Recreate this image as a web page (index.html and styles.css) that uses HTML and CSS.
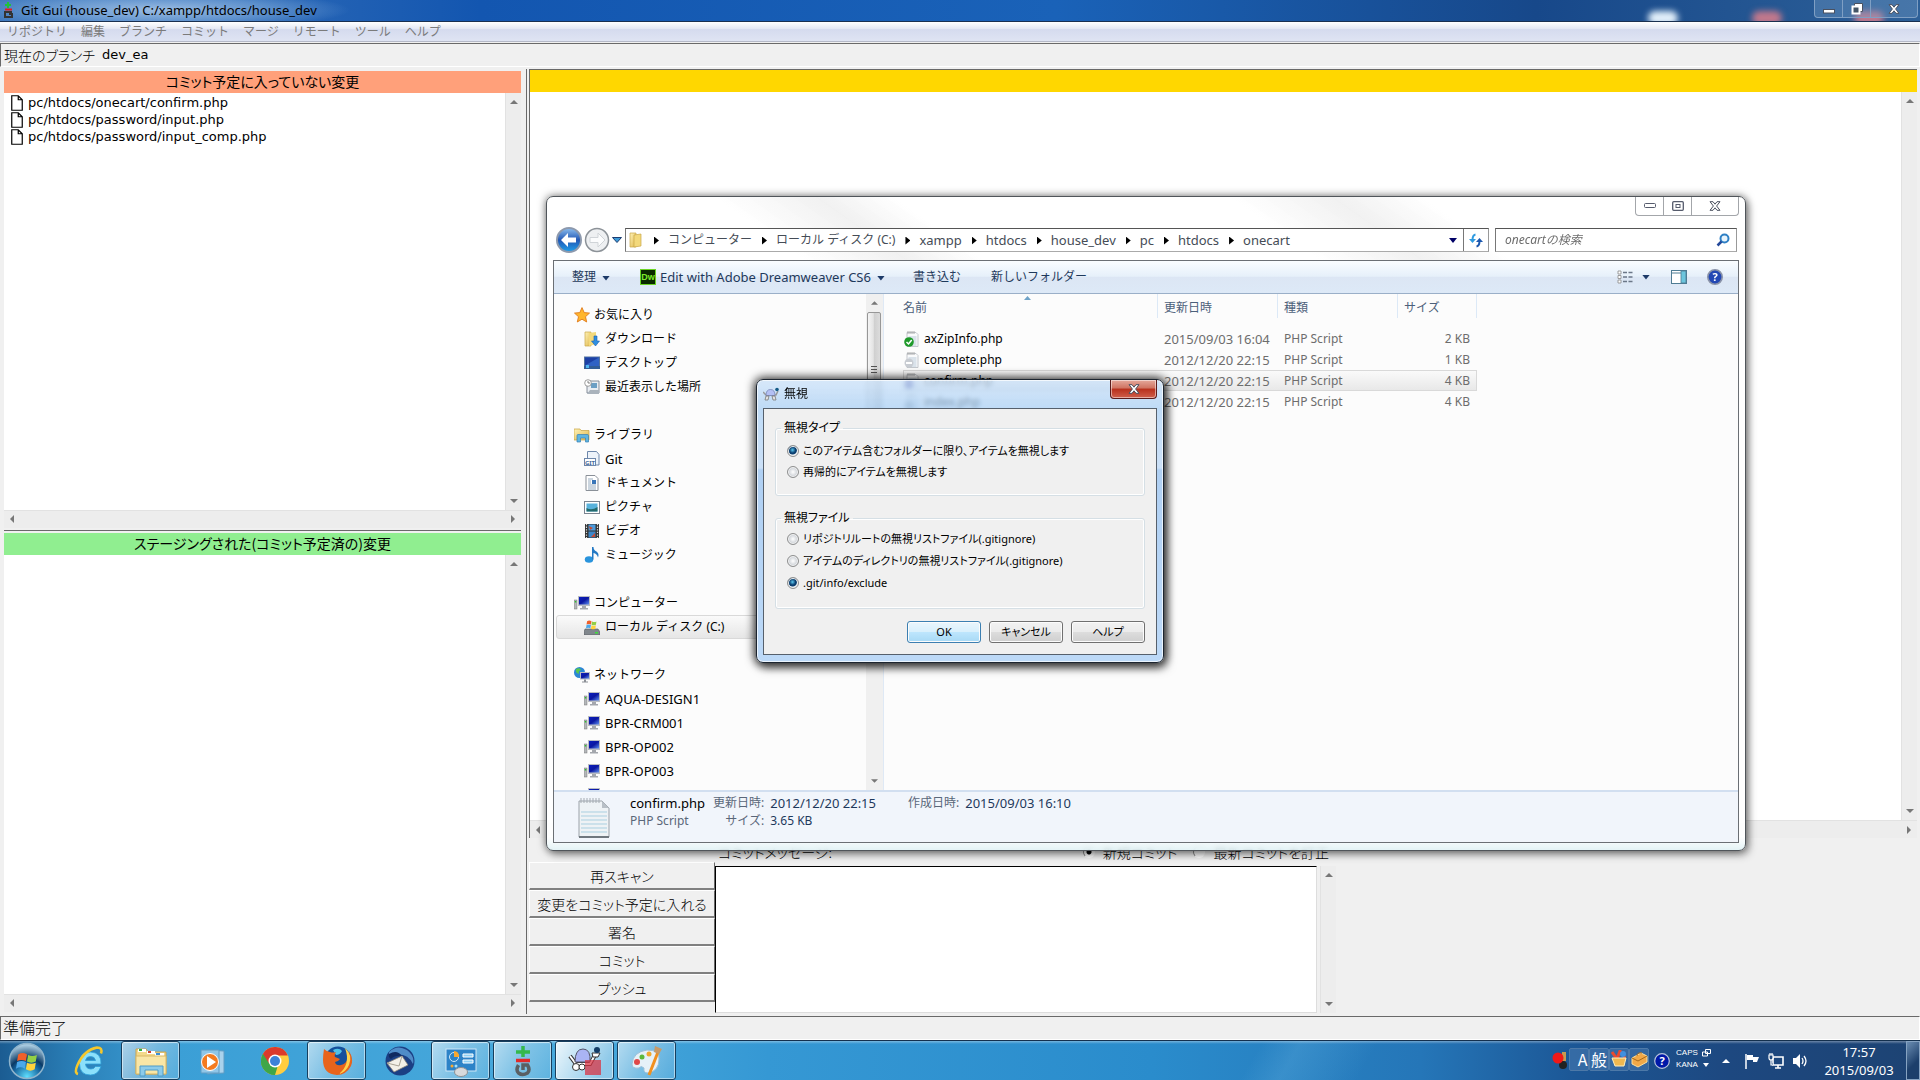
FILE: index.html
```html
<!DOCTYPE html>
<html lang="ja">
<head>
<meta charset="utf-8">
<title>Git Gui (house_dev) C:/xampp/htdocs/house_dev</title>
<link rel="stylesheet" href="styles.css">
</head>
<body>
<svg class="defs" width="0" height="0" aria-hidden="true">
  <defs>
    <linearGradient id="gYellow" x1="0" y1="0" x2="1" y2="1"><stop offset="0" stop-color="#fff3b8"/><stop offset="1" stop-color="#dfb64a"/></linearGradient>
    <linearGradient id="gScreen" x1="0" y1="0" x2="1" y2="1"><stop offset="0" stop-color="#0a1ec0"/><stop offset="0.5" stop-color="#0b17a0"/><stop offset="1" stop-color="#5c8df0"/></linearGradient>
    <linearGradient id="gBlue" x1="0" y1="0" x2="0" y2="1"><stop offset="0" stop-color="#8ec0f0"/><stop offset="0.5" stop-color="#2257b4"/><stop offset="1" stop-color="#1fa0ea"/></linearGradient>
    <radialGradient id="gOrb" cx="0.5" cy="0.95" r="0.9"><stop offset="0" stop-color="#5fe0ff"/><stop offset="0.45" stop-color="#14629c"/><stop offset="0.6" stop-color="#0a3a66"/><stop offset="1" stop-color="#a9cbe0"/></radialGradient>
  </defs>
  <symbol id="up" viewBox="0 0 8 4"><path d="M0 4 4 0 8 4z" fill="#777"/></symbol>
  <symbol id="down" viewBox="0 0 8 4"><path d="M0 0 4 4 8 0z" fill="#777"/></symbol>
  <symbol id="left" viewBox="0 0 4 8"><path d="M4 0 0 4 4 8z" fill="#777"/></symbol>
  <symbol id="right" viewBox="0 0 4 8"><path d="M0 0 4 4 0 8z" fill="#777"/></symbol>
  <symbol id="doc" viewBox="0 0 12 16"><path d="M.75 .75h6.5l4 4v10.500h-10.500z M7.250 .75v4h4" fill="#fff" stroke="#000" stroke-width="1.200"/></symbol>
  <symbol id="pc" viewBox="0 0 16 16"><rect x="4" y="1" width="12" height="10" fill="#b9bcc2"/><rect x="5" y="2" width="10" height="7.500" fill="url(#gScreen)"/><path d="M8 11h4v2h2v1.500H6V13h2z" fill="#a4a7ad"/><rect x="0" y="5" width="3" height="9" fill="#b4b7ba" stroke="#777" stroke-width=".5"/><rect x=".8" y="6" width="1.500" height="1.500" fill="#2fc02f"/></symbol>
  <symbol id="php" viewBox="0 0 16 16"><path d="M3 1.500h9l2 2v12H3z" fill="#fafbfc" stroke="#b5bac0" stroke-width=".8"/><path d="M4 0v3M6 0v3M8 0v3M10 0v3" stroke="#999" stroke-width=".8"/><path d="M4.500 6h8M4.500 8h8M4.500 10h8M4.500 12h8M4.500 14h8" stroke="#a9bfd0" stroke-width=".8"/></symbol>
  <symbol id="winx" viewBox="0 0 12 10"><path d="M1 .7h3l2 2.500 2-2.500h3L7.600 5 11 9.300H8L6 6.800 4 9.300H1L4.400 5z" fill="#fff" stroke="#4a5160"/></symbol>
  <symbol id="flagwin" viewBox="0 0 20 20"><path d="M2 4q4-2.500 8 0L9 10q-4-2-8 0z" fill="#f0602a"/><path d="M11 4.500q4 2 8 0L18 10.500q-4 2-8 0z" fill="#93cf45"/><path d="M1 11q4-2 8 0L8 17q-4-2.500-8 0z" fill="#4ca8ea"/><path d="M10 11.500q4 2 8 0l-1 6q-4 2.500-8 0z" fill="#ffd33c"/></symbol>
</svg>

<div class="desktop">
<main class="gitgui">
  <header class="titlebar">
    <svg class="i16" viewBox="0 0 16 16"><path d="M8 0v6M5 3h6" stroke="#1fc23c" stroke-width="2"/><path d="M5 7.500h7" stroke="#e02020" stroke-width="2"/><path d="M12 10H5v5h7v-3H9" fill="none" stroke="#333" stroke-width="2"/></svg>
    <h1>Git Gui (house_dev) C:/xampp/htdocs/house_dev</h1>
    <i class="glow"></i><i class="glow g2"></i><i class="glow g3"></i>
    <div class="winbtns">
      <button aria-label="最小化"><svg width="12" height="10" viewBox="0 0 12 10"><rect x=".5" y="5.500" width="11" height="3.500" fill="#fff" stroke="#4a5160"/></svg></button>
      <button aria-label="元に戻す"><svg width="12" height="12" viewBox="0 0 12 12"><path d="M3.500.5h8v8h-8z" fill="#fff" stroke="#4a5160"/><path d="M1.500 3.500h7v7h-7z" fill="#456" stroke="#fff" stroke-width="2"/></svg></button>
      <button class="wide" aria-label="閉じる"><svg width="12" height="10"><use href="#winx"/></svg></button>
    </div>
  </header>
  <nav class="menubar">
    <button>リポジトリ</button><button>編集</button><button>ブランチ</button><button>コミット</button><button>マージ</button><button>リモート</button><button>ツール</button><button>ヘルプ</button>
  </nav>
  <div class="branch"><span>現在のブランチ</span><span class="latin">dev_ea</span></div>

  <div class="panes">
    <div class="leftcol">
      <section class="filepane">
        <h2 class="unstaged">コミット予定に入っていない変更</h2>
        <div class="scrollgrid">
          <ul class="files latin">
            <li><svg width="12" height="16"><use href="#doc"/></svg>pc/htdocs/onecart/confirm.php</li>
            <li><svg width="12" height="16"><use href="#doc"/></svg>pc/htdocs/password/input.php</li>
            <li><svg width="12" height="16"><use href="#doc"/></svg>pc/htdocs/password/input_comp.php</li>
          </ul>
          <div class="vbar"><svg width="8" height="4"><use href="#up"/></svg><svg width="8" height="4"><use href="#down"/></svg></div>
          <div class="hbar"><svg width="4" height="8"><use href="#left"/></svg><svg width="4" height="8"><use href="#right"/></svg></div>
        </div>
      </section>
      <section class="filepane lower">
        <h2 class="staged">ステージングされた(コミット予定済の)変更</h2>
        <div class="scrollgrid">
          <ul class="files"></ul>
          <div class="vbar"><svg width="8" height="4"><use href="#up"/></svg><svg width="8" height="4"><use href="#down"/></svg></div>
          <div class="hbar"><svg width="4" height="8"><use href="#left"/></svg><svg width="4" height="8"><use href="#right"/></svg></div>
        </div>
      </section>
    </div>
    <div class="rightcol">
      <section class="diff">
        <div class="diffhead"></div>
        <div class="scrollgrid">
          <div class="files"></div>
          <div class="vbar"><svg width="8" height="4"><use href="#up"/></svg><svg width="8" height="4"><use href="#down"/></svg></div>
          <div class="hbar"><svg width="4" height="8"><use href="#left"/></svg><svg width="4" height="8"><use href="#right"/></svg></div>
        </div>
      </section>
      <section class="commit">
        <div class="actions">
          <button>再スキャン</button><button>変更をコミット予定に入れる</button><button>署名</button><button>コミット</button><button>プッシュ</button>
        </div>
        <div class="message">
          <div class="msghead">
            <label for="msg">コミットメッセージ:</label>
            <label class="opt"><input type="radio" name="ctype" checked>新規コミット</label>
            <label class="opt"><input type="radio" name="ctype">最新コミットを訂正</label>
          </div>
          <div class="msgbody">
            <textarea id="msg"></textarea>
            <div class="vbar"><svg width="8" height="4"><use href="#up"/></svg><svg width="8" height="4"><use href="#down"/></svg></div>
          </div>
        </div>
      </section>
    </div>
  </div>
  <footer class="status">準備完了</footer>
</main>

<section class="explorer" aria-label="onecart">
  <div class="winbtns light">
    <button aria-label="最小化"><svg width="12" height="6" viewBox="0 0 12 6"><rect x=".5" y=".5" width="11" height="4" rx="1" fill="#fff" stroke="#555b6c"/></svg></button>
    <button aria-label="最大化"><svg width="12" height="10" viewBox="0 0 12 10"><rect x=".7" y=".7" width="10.600" height="8.600" rx="1" fill="#fff" stroke="#555b6c" stroke-width="1.300"/><rect x="4" y="3.500" width="4" height="3" fill="none" stroke="#555b6c"/></svg></button>
    <button class="wide" aria-label="閉じる"><svg width="12" height="10"><use href="#winx"/></svg></button>
  </div>
  <div class="addressrow">
    <div class="navbtns">
      <button aria-label="戻る"><svg width="26" height="26" viewBox="0 0 26 26"><circle cx="13" cy="13" r="12" fill="url(#gBlue)" stroke="#8d99ad" stroke-width="2"/><path d="M5 13l7-7v4.500h8v5h-8V20z" fill="#fff"/></svg></button>
      <button aria-label="進む"><svg width="26" height="26" viewBox="0 0 26 26"><circle cx="13" cy="13" r="11.500" fill="#eef0f2" stroke="#8c9298" stroke-width="1.500"/><path d="M21 13l-7-7v4.500H6v5h8V20z" fill="#fbfcfd" stroke="#d0d4d8"/></svg></button>
      <button aria-label="履歴"><svg width="10" height="6" viewBox="0 0 10 6"><path d="M.5.500h9L5 5.500z" fill="#3e9bd8" stroke="#1c3d72"/></svg></button>
    </div>
    <div class="address">
      <svg class="i16" viewBox="0 0 16 16"><path d="M2 1h6v14H2z" fill="url(#gYellow)" stroke="#c9a648" stroke-width=".7"/><path d="M6 3l7-1v12l-7 1z" fill="#f3d97c" stroke="#c9a648" stroke-width=".7"/></svg>
      <b></b><a href="#">コンピューター</a><b></b><a href="#">ローカル ディスク (C:)</a><b></b><a href="#" class="lat">xampp</a><b></b><a href="#" class="lat">htdocs</a><b></b><a href="#" class="lat">house_dev</a><b></b><a href="#" class="lat">pc</a><b></b><a href="#" class="lat">htdocs</a><b></b><a href="#" class="lat">onecart</a>
      <i class="caret"></i>
      <button class="refresh" aria-label="更新"><svg width="16" height="16" viewBox="0 0 16 16"><path d="M7.500 2.500Q4.500 3 4.500 8" fill="none" stroke="#2e9ae0" stroke-width="2"/><path d="M1 7h7l-3.500 4z" fill="#2e9ae0"/><path d="M8.500 14.500q3-.5 3-5.500" fill="none" stroke="#1c57ae" stroke-width="2"/><path d="M8 10h7l-3.500-4z" fill="#1c57ae"/></svg></button>
    </div>
    <div class="search"><input type="text" aria-label="検索" placeholder="onecartの検索"><svg width="14" height="14" viewBox="0 0 14 14"><circle cx="8.500" cy="5.500" r="4" fill="#e8f4fc" stroke="#2e7fc4" stroke-width="2"/><path d="M5.500 8.500 1.500 12.500" stroke="#24489a" stroke-width="2.500"/></svg></div>
  </div>
  <div class="client">
    <div class="toolbar">
      <button>整理<i class="caret"></i></button>
      <button class="dw"><span class="dwicon">Dw</span><span class="lat">Edit with Adobe Dreamweaver CS6</span><i class="caret"></i></button>
      <button class="burn">書き込む</button>
      <button class="newf">新しいフォルダー</button>
      <div class="tools">
        <button aria-label="表示"><svg width="16" height="14" viewBox="0 0 16 14"><path d="M1 1h3v3H1zM1 5.500h3v3H1zM1 10h3v3H1z" fill="#fff" stroke="#888" stroke-width=".8"/><path d="M6 2.500h4M6 7h4M6 11.500h4M11.500 2.500h4M11.500 7h4M11.500 11.500h4" stroke="#6b7788" stroke-width="1.300"/></svg></button>
        <i class="caret"></i>
        <button aria-label="プレビュー"><svg width="16" height="14" viewBox="0 0 16 14"><rect x=".5" y=".5" width="15" height="13" fill="#fff" stroke="#4e7c94"/><path d="M0 3h16" stroke="#4e7c94"/><rect x="10" y="1" width="5" height="12" fill="#6cc5dd" stroke="#4e7c94" stroke-width=".8"/></svg></button>
        <button aria-label="ヘルプ"><svg width="16" height="16" viewBox="0 0 16 16"><circle cx="8" cy="8" r="7.200" fill="#2348b4" stroke="#8a93a8" stroke-width="1.600"/><text x="8" y="12" text-anchor="middle" font-size="11" font-weight="bold" fill="#fff">?</text></svg></button>
      </div>
    </div>
    <div class="body">
      <nav class="tree">
        <ul>
          <li><a href="#"><svg class="i16" viewBox="0 0 16 16"><path d="M8 .6l2.200 5 5.300.5-4 3.600 1.200 5.300L8 12.200 3.300 15l1.200-5.300-4-3.600 5.300-.5z" fill="#ffb62e" stroke="#e07b1c" stroke-width=".9"/></svg>お気に入り</a>
            <ul>
              <li><a href="#"><svg class="i16" viewBox="0 0 16 16"><path d="M1 1h6v14H1z" fill="url(#gYellow)" stroke="#c9a648" stroke-width=".7"/><path d="M5 2l7-1v12l-7 2z" fill="#f3d97c"/><path d="M10 5h3v5h2.500L11.500 15 7.500 10H10z" fill="#2f8fe0" stroke="#1a5fae" stroke-width=".6"/></svg>ダウンロード</a></li>
              <li><a href="#"><svg class="i16" viewBox="0 0 16 16"><rect x=".5" y="2" width="15" height="11.500" fill="#2f62c4" stroke="#55739c"/><path d="M1 2.500h14l-14 8z" fill="#1c3fa4"/><path d="M0 11h16v3H0z" fill="#315d96"/><rect x="2" y="10" width="3" height="3" fill="#4fb4f0"/></svg>デスクトップ</a></li>
              <li><a href="#"><svg class="i16" viewBox="0 0 16 16"><path d="M5 2h10v12H3V6z" fill="#e9edf2" stroke="#7a8490" stroke-width=".9"/><rect x="7" y="4" width="6" height="5" fill="#6c9fc4"/><path d="M3 15l3-4h9v4z" fill="#aab3bc"/><circle cx="4" cy="4" r="3.300" fill="#fff" stroke="#888" stroke-width=".8"/><path d="M4 2v2h2" fill="none" stroke="#555" stroke-width=".7"/></svg>最近表示した場所</a></li>
            </ul></li>
          <li><a href="#"><svg class="i16" viewBox="0 0 16 16"><path d="M0 2h6l1 1.500h8V13H0z" fill="url(#gYellow)" stroke="#c6a23e" stroke-width=".7"/><path d="M3 15V8.500q0-1 1-1h9q1.500 0 1.500 1V15h-3v-4h-5v4z" fill="#5fb5e0" stroke="#3580b4" stroke-width=".7"/></svg>ライブラリ</a>
            <ul>
              <li><a href="#" class="lat"><svg class="i16" viewBox="0 0 16 16"><path d="M3.500.5h9l2.500 3V14H3.500z" fill="#edf3fa" stroke="#6d87ab"/><rect x=".5" y="7.500" width="11" height="7" fill="#fff" stroke="#6d87ab"/><text x="6" y="13.500" text-anchor="middle" font-size="6" font-weight="bold" fill="#45689a">GIT</text></svg>Git</a></li>
              <li><a href="#"><svg class="i16" viewBox="0 0 16 16"><path d="M2 .5h9l3 3v12H2z" fill="#fff" stroke="#8a9098"/><path d="M4 4h5M4 6h3M4 8h3M4 10h8M4 12h8M4 14h8" stroke="#8da3b8" stroke-width=".9"/><rect x="8" y="5" width="4" height="4" fill="#3a76b8"/></svg>ドキュメント</a></li>
              <li><a href="#"><svg class="i16" viewBox="0 0 16 16"><rect x=".5" y="2.500" width="15" height="12" fill="#fff" stroke="#7a8490"/><rect x="2.500" y="4.500" width="11" height="8" fill="#58b2dc"/><path d="M2.500 9q5 3 11-1v4.500h-11z" fill="#246a6c"/></svg>ピクチャ</a></li>
              <li><a href="#"><svg class="i16" viewBox="0 0 16 16"><rect x="1" y="1" width="14" height="14" fill="#333"/><path d="M2.500 1v14M13.500 1v14" stroke="#ddd" stroke-width="1.200" stroke-dasharray="1.300 1.300"/><rect x="4.500" y="1.500" width="7" height="6" fill="#4c9bdc"/><rect x="4.500" y="8.500" width="7" height="6" fill="#3c86c8"/><path d="M5 3l4 2-3 2zM7 14l4-4v4z" fill="#c04a34"/></svg>ビデオ</a></li>
              <li><a href="#"><svg class="i16" viewBox="0 0 16 16"><ellipse cx="5" cy="12.500" rx="4.200" ry="3.200" fill="#2a94dc"/><path d="M8 12.500V0h1.500q0 3 3 4.500 3 2 1.500 6-1-4-4.500-4.500v6.500z" fill="#2479c4"/></svg>ミュージック</a></li>
            </ul></li>
          <li><a href="#"><svg class="i16"><use href="#pc"/></svg>コンピューター</a>
            <ul>
              <li class="sel"><a href="#"><svg class="i16" viewBox="0 0 16 16"><path d="M1 10h13l2 3v3H0v-3z" fill="#80868c" stroke="#55595e" stroke-width=".6"/><rect x="11" y="13" width="3" height="1.500" fill="#3ae03a"/><svg x="2" y="0" width="11" height="11"><use href="#flagwin"/></svg></svg>ローカル ディスク (C:)</a></li>
            </ul></li>
          <li><a href="#"><svg class="i16" viewBox="0 0 16 16"><circle cx="5.500" cy="5.500" r="5.500" fill="#2c86d4"/><path d="M2 2q4-2 5 1-3 1-2 4-4-1-3-5z" fill="#57c84c"/><rect x="6" y="5" width="10" height="7.500" fill="#b9bcc2"/><rect x="7" y="6" width="8" height="5.500" fill="url(#gScreen)"/><path d="M10 12.500h2v2h2v1H8v-1h2z" fill="#8b8f96"/></svg>ネットワーク</a>
            <ul class="lat">
              <li><a href="#"><svg class="i16"><use href="#pc"/></svg>AQUA-DESIGN1</a></li>
              <li><a href="#"><svg class="i16"><use href="#pc"/></svg>BPR-CRM001</a></li>
              <li><a href="#"><svg class="i16"><use href="#pc"/></svg>BPR-OP002</a></li>
              <li><a href="#"><svg class="i16"><use href="#pc"/></svg>BPR-OP003</a></li>
              <li><a href="#" aria-label="PC"><svg class="i16"><use href="#pc"/></svg></a></li>
            </ul></li>
        </ul>
      </nav>
      <div class="treebar"><svg width="7" height="4"><use href="#up"/></svg><div class="thumb"></div><svg width="7" height="4"><use href="#down"/></svg></div>
      <div class="list">
        <table>
          <colgroup><col class="cname"><col class="cmid"><col class="cmid"><col class="csize"></colgroup>
          <thead><tr><th class="sorted">名前</th><th>更新日時</th><th>種類</th><th>サイズ</th></tr></thead>
          <tbody>
            <tr><td><div class="fname"><svg class="i16" viewBox="0 0 16 16"><use href="#php"/><circle cx="5" cy="11" r="4.800" fill="#1f9a2a"/><path d="M2.500 11l2 2 3.200-4" fill="none" stroke="#fff" stroke-width="1.500"/></svg>axZipInfo.php</div></td><td class="lat">2015/09/03 16:04</td><td>PHP Script</td><td>2 KB</td></tr>
            <tr><td><div class="fname"><svg class="i16" viewBox="0 0 16 16"><use href="#php"/><circle cx="5" cy="11" r="4.500" fill="#c8ccd2"/><path d="M2 11h6" stroke="#fff" stroke-width="2"/></svg>complete.php</div></td><td class="lat">2012/12/20 22:15</td><td>PHP Script</td><td>1 KB</td></tr>
            <tr class="sel"><td><div class="fname"><svg class="i16" viewBox="0 0 16 16"><use href="#php"/><circle cx="5" cy="11" r="4.500" fill="#3a3f9a"/></svg>confirm.php</div></td><td class="lat">2012/12/20 22:15</td><td>PHP Script</td><td>4 KB</td></tr>
            <tr><td><div class="fname"><svg class="i16" viewBox="0 0 16 16"><use href="#php"/><circle cx="5" cy="11" r="4.500" fill="#aab0b8"/></svg>index.php</div></td><td class="lat">2012/12/20 22:15</td><td>PHP Script</td><td>4 KB</td></tr>
          </tbody>
        </table>
      </div>
    </div>
    <div class="details">
      <svg width="32" height="40" viewBox="0 0 32 40"><path d="M1 3h23l7 7v29H1z" fill="#eef2f5" stroke="#9aa1a8"/><path d="M24 3v7h7z" fill="#b8bfc6"/><path d="M3 0v5M6 0v5M9 0v5M12 0v5M15 0v5M18 0v5M21 0v5" stroke="#a5abb2"/><path d="M3 14h26M3 18h26M3 22h26M3 26h26M3 30h26M3 34h26" stroke="#a9cfe0"/><path d="M1 39h30" stroke="#6f777e" stroke-width="2"/></svg>
      <div class="dgrid">
        <strong>confirm.php</strong><span class="k">更新日時:</span><span class="lat">2012/12/20 22:15</span><span class="k">作成日時:</span><span class="lat">2015/09/03 16:10</span>
        <span class="type">PHP Script</span><span class="k">サイズ:</span><span>3.65 KB</span>
      </div>
    </div>
  </div>
</section>

<form class="dialog" aria-label="無視">
  <div class="dtitle">
    <svg width="16" height="14" viewBox="0 0 16 14"><path d="M0 5l3 3h10l2-4" fill="none" stroke="#999" stroke-width="1.500"/><path d="M3 8.500q0-6 4.500-6T12 8.500z" fill="#b4c0f4" stroke="#7a88b8" stroke-width=".8"/><circle cx="14" cy="2.500" r="1.800" fill="#135a86"/><path d="M3 9l-1 4h3l1-4zM9 9l1 4h3l-1-4z" fill="#e5e5e5" stroke="#777" stroke-width=".8"/></svg>
    <span>無視</span>
    <button type="button" class="redclose" aria-label="閉じる"><svg width="12" height="10"><use href="#winx"/></svg></button>
  </div>
  <div class="dbody">
    <fieldset class="f1">
      <legend>無視タイプ</legend>
      <label><input type="radio" name="itype" checked>このアイテム含むフォルダーに限り、アイテムを無視します</label>
      <label><input type="radio" name="itype">再帰的にアイテムを無視します</label>
    </fieldset>
    <fieldset class="f2">
      <legend>無視ファイル</legend>
      <label><input type="radio" name="ifile">リポジトリルートの無視リストファイル(.gitignore)</label>
      <label><input type="radio" name="ifile">アイテムのディレクトリの無視リストファイル(.gitignore)</label>
      <label><input type="radio" name="ifile" checked>.git/info/exclude</label>
    </fieldset>
    <div class="dbtns"><button type="button" class="ok">OK</button><button type="button">キャンセル</button><button type="button">ヘルプ</button></div>
  </div>
</form>

<footer class="taskbar">
  <button class="start" aria-label="スタート"><svg width="38" height="38" viewBox="0 0 38 38"><circle cx="19" cy="19" r="17.500" fill="url(#gOrb)" stroke="#8fb4cc" stroke-width="1.500"/><svg x="8" y="8" width="22" height="22"><use href="#flagwin"/></svg></svg></button>
  <button class="task" aria-label="Internet Explorer"><svg width="32" height="32" viewBox="0 0 32 32"><path d="M28 19H12.500q.5 5 5.500 5 3 0 4.500-2.500H28Q25 30 17.500 30 6.500 30 6.500 18.500T17.500 7Q28.500 7.500 28 19zM12.500 15.500h10q-.5-4-5-4t-5 4z" fill="#8be0fb" stroke="#2f9fd8" stroke-width=".8"/><path d="M5 29q-4-1-.5-9Q11 5 24 2.500q6 0 4 6" fill="none" stroke="#f5c72c" stroke-width="2.500"/></svg></button>
  <button class="task on" aria-label="エクスプローラー"><svg width="34" height="32" viewBox="0 0 34 32"><path d="M2 4h10l2 3h18v22H2z" fill="#f3d98a" stroke="#c9a450"/><path d="M4 4h8v3H4z" fill="#fff"/><path d="M5 4h3v2H5z" fill="#2fae3a"/><path d="M13 6h8v3h-8z" fill="#fff"/><path d="M14 6h3v2h-3z" fill="#d04030"/><path d="M21 8h9v3h-9z" fill="#fff"/><path d="M22 8h4v2h-4z" fill="#3a90d8"/><path d="M2 11h30v18H2z" fill="#f9e6a6" stroke="#d8b866"/><path d="M6 31V21h23v10h-5v-6H11v6z" fill="#8ccbea" stroke="#4f9cc8"/></svg></button>
  <button class="task" aria-label="Media Player"><svg width="30" height="30" viewBox="0 0 30 30"><path d="M9 4l17 1v22l-17 1z" fill="#a9d2ec" stroke="#5e9cc4"/><path d="M3 4h18v23H3z" fill="#90c6e8" stroke="#5e9cc4"/><circle cx="12" cy="16" r="8.500" fill="#f57b20" stroke="#fff"/><path d="M9 10l9 6-9 6z" fill="#fff"/></svg></button>
  <button class="task" aria-label="Chrome"><svg width="30" height="30" viewBox="0 0 30 30"><circle cx="15" cy="15" r="14" fill="#ffcd40"/><path d="M15 15v14A14 14 0 0 1 2.900 8z" fill="#3fa648"/><path d="M9.400 18.200 2.900 8A14 14 0 0 1 27.800 9.500H15z" fill="#dc3a2c"/><path d="M15 29A14 14 0 0 1 2.900 8l6.500 10.200 8 3z" fill="#3fa648"/><circle cx="15" cy="15" r="6.500" fill="#fff"/><circle cx="15" cy="15" r="5" fill="#3d82d8"/></svg></button>
  <button class="task on" aria-label="Firefox"><svg width="32" height="32" viewBox="0 0 32 32"><circle cx="17" cy="15" r="13.500" fill="#14509c"/><path d="M12 5q6-3 9 1-2 4-6 4z" fill="#4fc0e8"/><path d="M3 4q3 3 6 3 3 1 6 0-2 3-1 5l5 2q-2 3-5 3 1 4 6 3 5-1 7-7 1 7-4 10 7-3 5-17 5 8 2 15Q25 30 16 30 2 29 2 15q0-5 1-11z" fill="#e8641c"/><path d="M24 3q8 7 4 17-3 7-10 9 12-10 6-26z" fill="#ffd24a"/></svg></button>
  <button class="task" aria-label="Thunderbird"><svg width="32" height="32" viewBox="0 0 32 32"><circle cx="17" cy="16" r="14.500" fill="#1b3f84"/><path d="M6 7Q14-1 24 5q8 6 6 14Q24 6 6 11z" fill="#4f8cc8"/><path d="M4 18l15-7 6 9-14 7z" fill="#f3f0e8" stroke="#8a8578" stroke-width=".8"/><path d="M4 18l12 3 3-10" fill="none" stroke="#a8a294"/><path d="M6 9q8-5 13 2-7-1-11 3-3-2-2-5z" fill="#102a60"/></svg></button>
  <button class="task on" aria-label="コントロール"><svg width="34" height="32" viewBox="0 0 34 32"><rect x="2" y="4" width="30" height="22" fill="#2c83c8" stroke="#cfe8f8"/><circle cx="10" cy="12" r="4.500" fill="none" stroke="#cfe8f8"/><path d="M10 12V6a5 5 0 0 1 5 6z" fill="#f8a830"/><path d="M19 9h10v3H19zM19 15h10v3H19z" fill="#8fd0f4" stroke="#fff"/><circle cx="8" cy="21" r="1.500" fill="#f8a830"/><circle cx="12" cy="21" r="1.500" fill="#9fe0ff"/><ellipse cx="17" cy="27" rx="6.500" ry="4.500" fill="#d8dadc" stroke="#8c9094"/></svg></button>
  <button class="task on" aria-label="Git Gui"><svg width="20" height="32" viewBox="0 0 20 32"><path d="M10 1v11M3 7h14" stroke="#35b84c" stroke-width="3.500"/><path d="M3 15.500h14" stroke="#e02a2a" stroke-width="3.500"/><path d="M5.500 20q-3 5 0 8 4 3 9 0 3-3 0-8H10v5" fill="none" stroke="#5a5f63" stroke-width="3.500"/></svg></button>
  <button class="task on bright" aria-label="TortoiseGit"><svg width="34" height="32" viewBox="0 0 34 32"><path d="M2 11l6 8h14l5-9" fill="none" stroke="#333" stroke-width="4"/><path d="M2 11l6 8h14l5-9" fill="none" stroke="#fff" stroke-width="2"/><path d="M7 17Q7 4 15 4t7 13z" fill="#aab4f4" stroke="#556"/><path d="M24 8h8l-2 4h-5z" fill="#fff" stroke="#333"/><circle cx="29" cy="5" r="3" fill="#123c66"/><circle cx="8" cy="22" r="3.500" fill="#fff" stroke="#333"/><circle cx="14" cy="22" r="3" fill="#fff" stroke="#333"/><path d="M17 15h16v15H17z" fill="#d83444" opacity=".75"/></svg></button>
  <button class="task on" aria-label="ペイント"><svg width="34" height="32" viewBox="0 0 34 32"><path d="M2 19Q3 7 17 5q13 0 12 9 0 12-11 14-5 0-4-5-3-3-5 0-7 1-7-4z" fill="#e6f1f8" stroke="#9cc0d8"/><circle cx="7" cy="17" r="3" fill="#e04848"/><circle cx="12" cy="12" r="2.500" fill="#5cb83c"/><circle cx="19" cy="9" r="2.500" fill="#f0a830"/><path d="M28 7l-9 23" stroke="#f09020" stroke-width="3"/><path d="M25 1l7 3-3 5-5-2z" fill="#c89a68"/></svg></button>
  <div class="tray">
    <svg width="16" height="18" viewBox="0 0 16 18"><circle cx="11" cy="13" r="4" fill="#222"/><path d="M10 0h4v9h-4z" fill="#c89a50"/><circle cx="6" cy="6" r="5.500" fill="#f01818"/></svg>
    <div class="ime"><button class="alpha">A</button><button>般</button><button aria-label="パッド"><svg width="18" height="18" viewBox="0 0 18 18"><path d="M2 2l5 7 3-8 5 7" fill="none" stroke="#e84a30" stroke-width="3"/><path d="M2 8h14l-2 8H5z" fill="#f0b850" stroke="#fff0c0"/><circle cx="13" cy="4" r="3" fill="#3f90e0"/></svg></button><button aria-label="ツール"><svg width="18" height="18" viewBox="0 0 18 18"><path d="M2 8l9-5 6 3v6l-9 5-6-3z" fill="#f0a848" stroke="#ffdf9a"/><path d="M2 8l6 3 9-5M7 6q0-4 5-3" fill="none" stroke="#a86818"/></svg></button></div>
    <svg width="16" height="16" viewBox="0 0 16 16"><circle cx="8" cy="8" r="7.300" fill="#0018a8" stroke="#b8c4dc" stroke-width="1.200"/><text x="8" y="12" text-anchor="middle" font-size="11" font-weight="bold" fill="#fff">?</text></svg>
    <div class="caps"><span>CAPS</span><svg width="9" height="8" viewBox="0 0 9 8"><path d="M3.500.5h5v4h-5zM.500 3h5v4h-5z" fill="#1f4a80" stroke="#fff"/></svg><span>KANA</span><svg width="6" height="4" viewBox="0 0 6 4"><path d="M0 0h6L3 4z" fill="#fff"/></svg></div>
    <svg class="more" width="8" height="4" viewBox="0 0 8 4"><path d="M0 4 4 0 8 4z" fill="#fff"/></svg>
    <svg width="16" height="16" viewBox="0 0 16 16"><path d="M2 1v15" stroke="#fff" stroke-width="1.500"/><path d="M3 2h6v2h6l-2 5H9V7H3z" fill="#fff"/></svg>
    <svg width="16" height="16" viewBox="0 0 16 16"><path d="M5 4h10v8H5zM7 15h6M10 12v3" fill="none" stroke="#fff" stroke-width="1.600"/><path d="M1 2v3q0 2 2 2t2-2V2zM3 7v5h2M2 0v2M4 0v2" fill="#1f4a80" stroke="#fff" stroke-width="1.200"/></svg>
    <svg width="16" height="16" viewBox="0 0 16 16"><path d="M1 5h3l4-4v14l-4-4H1z" fill="#fff"/><path d="M10 5q2 3 0 6M12 3q4 5 0 10" fill="none" stroke="#fff" stroke-width="1.300"/></svg>
    <div class="clock"><time>17:57</time><time>2015/09/03</time></div>
    <button class="peek" aria-label="デスクトップの表示"></button>
  </div>
</footer>
</div>
</body>
</html>
```
FILE: styles.css
```css
* { box-sizing: border-box; }
body {
  margin: 0;
  background: #f0f0f0;
  color: #000;
  font: 12px/16px "Noto Sans", "Noto Sans CJK JP", sans-serif;
}
h1, h2, ul { margin: 0; padding: 0; font-weight: normal; list-style: none; }
button { margin: 0; padding: 0; border: 0; background: none; color: inherit; font: inherit; }
a { color: inherit; text-decoration: none; }
svg { display: block; flex: none; }
.defs { position: absolute; }
.i16 { width: 16px; height: 16px; }
.lat { font-size: 13px; }

.desktop { position: relative; display: flex; flex-direction: column; min-height: 100vh; overflow: hidden; }

/* Git Gui main window */
.gitgui {
  flex: 1; display: flex; flex-direction: column;
  font: 300 14px/20px "Noto Sans CJK JP", sans-serif;
  font-feature-settings: "palt";
}
.titlebar {
  position: relative; display: flex; align-items: center; gap: 5px;
  height: 22px; padding-bottom: 1px; overflow: hidden;
  border-bottom: 1px solid #1a3050;
  background:
    radial-gradient(ellipse 190px 20px at 160px 10px, rgba(190, 215, 240, .75), rgba(150, 190, 230, .45) 60%, transparent),
    linear-gradient(90deg, #3f78bd 0, #2362b4 320px, #1356b0 25%, #1a62b8 55%, #17488a 80%, #2d6098);
}
.titlebar h1 { font: 13px/20px "Noto Sans", sans-serif; }
.titlebar h1, .titlebar > svg, .winbtns { z-index: 1; }
.glow { position: absolute; top: 11px; right: 242px; width: 30px; height: 14px; border-radius: 8px; background: #e2effa; filter: blur(3px); }
.glow.g2 { right: 138px; background: #c2788c; }
.glow.g3 { right: 36px; background: #c2788c; }
.winbtns { display: flex; align-self: flex-start; margin-left: auto; margin-right: 2px; border: 1px solid #7f9fc4; border-top: 0; border-radius: 0 0 4px 4px; background: rgba(120, 160, 200, .35); }
.winbtns button { display: grid; place-items: center; width: 28px; height: 17px; border-right: 1px solid #7f9fc4; }
.winbtns .wide { width: 46px; border-right: 0; }
.menubar {
  display: flex; align-items: center; gap: 14px; height: 20px; padding-left: 7px; padding-bottom: 1px;
  background: linear-gradient(#fff, #e4e8f4 35%, #d5dbee 40%, #dfe4f3);
  border-bottom: 1px solid #b5b9c8;
  font: 12px/16px "Noto Sans CJK JP", sans-serif; font-feature-settings: normal;
  color: #7b7b7b;
}
.branch {
  display: flex; align-items: center; gap: 7px; height: 24px; margin-top: 1px; padding-left: 3px;
  border: 1px solid #696969; border-right-color: #fff; border-bottom-color: #fff;
}
.latin { font: 13px/18px "DejaVu Sans", sans-serif; }
.panes { flex: 1; display: flex; min-height: 0; padding: 2px 2px 2px 0; }
.leftcol { flex: 0 0 527px; display: grid; grid-template-rows: 18fr 19fr; gap: 2px; padding: 2px 5px 2px 4px; border-right: 1px solid #696969; }
.filepane { display: flex; flex-direction: column; min-height: 0; }
.filepane.lower { border-top: 1px solid #696969; padding-top: 2px; }
.filepane h2 { flex: none; height: 22px; font-size: 14px; line-height: 21px; text-align: center; }
.unstaged { background: #ffa07a; }
.staged { background: #90ee90; }
.scrollgrid { flex: 1; display: grid; grid-template: 1fr 18px / 1fr 16px; min-height: 0; }
.files { background: #fff; }
ul.files { padding: 1px 0 0 7px; }
.files li { display: flex; align-items: center; gap: 5px; height: 17px; }
.vbar { display: flex; flex-direction: column; justify-content: space-between; align-items: center; padding: 7px 0; background: #ededed; border-left: 1px solid #e2e2e2; }
.hbar { display: flex; justify-content: space-between; align-items: center; padding: 0 6px; background: #ededed; border-top: 1px solid #e2e2e2; }
.hbar { grid-column: 1 / -1; }
.rightcol { flex: 1; display: flex; flex-direction: column; min-width: 0; margin-left: 2px; }
.diff { flex: 1; display: flex; flex-direction: column; min-height: 0; border-top: 1px solid #696969; border-left: 1px solid #696969; margin-right: 1px; }
.diffhead { height: 22px; background: #ffd700; }
.commit { display: flex; height: 176px; }
.actions { width: 186px; padding-top: 24px; }
.actions button {
  display: block; width: 100%; height: 28px; background: #f0f0f0; line-height: 24px;
  border: 1px solid #fff; border-right-color: #696969; border-bottom: 2px solid #808080; font-feature-settings: "palt";
}
.message { flex: 0 1 621px; display: flex; flex-direction: column; }
.msghead { display: flex; align-items: center; gap: 16px; height: 28px; padding: 0 7px 0 3px; }
.msghead label:first-child { margin-right: auto; }
.opt { display: flex; align-items: center; gap: 8px; }
.opt input { appearance: none; width: 12px; height: 12px; margin: 0; border: 1px solid #888; border-right-color: #fff; border-bottom-color: #fff; border-radius: 50%; background: #fff; }
.opt input:checked { background: radial-gradient(#000 2px, #fff 3px); }
.msgbody { flex: 1; display: flex; padding-bottom: 1px; }
.msgbody textarea { flex: 1; margin: 0 3px 0 0; border: 1px solid #000; border-right-color: #ddd; border-bottom-color: #ddd; background: #fff; resize: none; outline: 0; font: inherit; }
.msgbody .vbar { width: 16px; }
.status { height: 24px; padding-left: 2px; border: 1px solid #696969; border-right-color: #fff; border-bottom-color: #fff; font-size: 16px; line-height: 21px; }

/* Explorer window, floating over the main window */
.explorer {
  position: absolute; left: 546px; top: 196px; width: 1200px; height: 655px;
  display: flex; flex-direction: column; padding: 0 6px 7px;
  border: 1px solid #50555a; border-radius: 7px;
  background:
    linear-gradient(35deg, transparent 20%, rgba(215, 215, 215, .35) 28%, transparent 34%, transparent 60%, rgba(215, 215, 215, .35) 68%, transparent 75%) 0 0 / 100% 64px no-repeat,
    linear-gradient(rgba(255, 255, 255, .95), rgba(255, 255, 255, .95) 640px, rgba(225, 243, 246, .85));
  backdrop-filter: blur(2px);
  box-shadow: 0 0 8px rgba(0, 0, 0, .55), 3px 4px 8px rgba(0, 0, 0, .3);
}
.winbtns.light { margin-right: 0; height: 19px; border-color: #a3a6aa; background: rgba(255, 255, 255, .6); }
.light button { height: 18px; border-color: #a3a6aa; }
.light .wide { width: 46px; }
.addressrow { display: flex; align-items: center; gap: 6px; height: 44px; padding-right: 2px; padding-top: 3px; }
.navbtns { display: flex; align-items: center; gap: 2px; width: 66px; padding-left: 3px; }
.address, .search { display: flex; align-items: center; height: 24px; border: 1px solid #777; border-color: #555 #999 #aaa #777; background: #fff; }
.address { flex: 1; padding-left: 2px; color: #454c56; }
.address b { width: 5px; height: 8px; margin: 2px 10px 0; background: #000; clip-path: polygon(0 0, 100% 50%, 0 100%); }
.caret { display: inline-block; width: 8px; height: 5px; background: #1d3a68; clip-path: polygon(0 0, 100% 0, 50% 100%); }
.address .caret { margin: 2px 6px 0 auto; background: #006; }
.refresh { display: grid; place-items: center; width: 25px; height: 22px; border-left: 1px solid #777; }
.address > a { white-space: nowrap; margin-left: -1px; }
.search { width: 242px; padding: 0 6px 0 9px; }
.search input { flex: 1; min-width: 0; padding: 0; border: 0; outline: 0; font: 12px/20px "Noto Sans", "Noto Sans CJK JP", sans-serif; font-style: italic; background: none; }
.search input::placeholder { color: #6d6d6d; opacity: 1; }
.client { flex: 1; display: flex; flex-direction: column; min-height: 0; border: 1px solid #6b6f74; background: #fcfcfc; }
.toolbar {
  display: flex; align-items: center; height: 33px; padding: 0 15px 0 18px; color: #1e395b;
  background: linear-gradient(#fafdff, #e6f0fa 48%, #dce6f4 50%, #dde9f7); border-bottom: 1px solid #9aafc8;
}
.toolbar button { display: flex; align-items: center; }
.toolbar button .caret { margin: 2px 0 0 6px; }
.toolbar .dw { margin-left: 30px; gap: 4px; }
.toolbar .dw .caret { margin-left: 2px; }
.dwicon { width: 16px; height: 16px; background: #0a2a00; border: 1px solid #6bd425; color: #7dea2c; font: bold 9px/14px "Liberation Sans", sans-serif; text-align: center; }
.toolbar .burn { margin-left: 28px; }
.toolbar .newf { margin-left: 30px; }
.tools { display: flex; align-items: center; margin-left: auto; gap: 9px; }
.tools .caret + button { margin: 0 11px 0 12px; }
.body { flex: 1; display: flex; min-height: 0; }
.tree { width: 312px; overflow: hidden; padding-top: 9px; }
.tree a { display: flex; align-items: center; gap: 4px; height: 24px; padding-left: 20px; }
.tree ul ul a { padding-left: 30px; gap: 5px; }
.tree ul ul { margin-bottom: 24px; }
.tree .sel a { margin: 0 3px 0 2px; padding-left: 27px; border: 1px solid #d9d9d9; border-radius: 3px; background: linear-gradient(#fafafa, #e6e6e6); }
.treebar { display: flex; flex-direction: column; align-items: center; width: 18px; padding: 7px 2px 7px 1px; background: #f0f0f0; border-right: 1px solid #dfe9f5; }
.thumb { width: 14px; height: 116px; margin: 7px 0 auto; border: 1px solid #979797; border-radius: 2px; background: repeating-linear-gradient(#555 0 1px, transparent 1px 3px) center / 6px 9px no-repeat, linear-gradient(90deg, #f5f5f5, #e3e3e3 45%, #cfcfcf 50%, #dcdcdc); }
.list { flex: 1; padding-left: 19px; }
table { width: 574px; table-layout: fixed; border-collapse: separate; border-spacing: 0; }
.cname { width: 255px; } .cmid { width: 120px; } .csize { width: 79px; }
th { position: relative; height: 34px; padding: 5px 6px 0; font-weight: normal; text-align: left; vertical-align: top; color: #4c607a; border: solid; border-image: linear-gradient(#dce9f7 70%, transparent 70%) 1; border-width: 0 1px 0 0; line-height: 18px; }
th.sorted { padding-left: 0; }
th.sorted::after { content: ""; position: absolute; left: 121px; top: 2px; width: 7px; height: 4px; background: #6fa3c8; clip-path: polygon(50% 0, 100% 100%, 0 100%); }
td { height: 21px; padding: 0 6px; color: #6d6d6d; white-space: nowrap; border: solid transparent; border-width: 1px 0; line-height: 18px; }
td:first-child { padding-left: 0; color: #000; border-left-width: 1px; }
td:last-child { text-align: right; border-right-width: 1px; }
.fname { display: flex; align-items: center; gap: 4px; }
tr.sel td { background: linear-gradient(#fafafa, #e8e8e8); border-color: #d9d9d9; }
.details { display: flex; gap: 20px; height: 52px; padding: 6px 24px; background: #f1f5fb; border-top: 2px solid #d2dff0; }
.dgrid { display: grid; grid-template-columns: 77px auto auto auto auto; grid-auto-rows: 18px; align-content: start; align-items: center; column-gap: 6px; color: #1e395b; margin-top: -4px; }
.dgrid strong { font-weight: normal; color: #000; font-size: 13px; }
.dgrid .k { text-align: right; color: #5a6779; }
.dgrid .k:nth-child(4) { margin-left: 26px; }
.type { color: #5a6779; }

/* Ignore dialog */
.dialog {
  position: absolute; left: 756px; top: 379px; width: 408px; height: 284px;
  display: flex; flex-direction: column; padding: 0 6px 7px;
  border: 1px solid #1c2530; border-radius: 7px;
  background: linear-gradient(rgba(205, 226, 248, .8), rgba(165, 205, 244, .7) 28px, rgba(200, 222, 246, .95) 88px, rgba(171, 205, 242, .95) 90px, rgba(185, 215, 247, .95));
  backdrop-filter: blur(2px);
  box-shadow: inset 0 0 0 1px rgba(255, 255, 255, .7), 0 0 10px 2px rgba(0, 0, 0, .75), 3px 5px 10px rgba(0, 0, 0, .5);
  font-family: "Noto Sans", "Noto Sans CJK JP", sans-serif;
}
.dtitle { display: flex; align-items: center; height: 28px; gap: 5px; }
.dtitle span { flex: 1; }
.redclose { display: grid; place-items: center; align-self: flex-start; width: 47px; height: 19px; border: 1px solid #5a1c1c; border-top: 0; border-radius: 0 0 4px 4px; background: linear-gradient(#e5a99c, #cf7361 45%, #b8301c 50%, #d0604c); box-shadow: inset 0 0 0 1px rgba(255, 255, 255, .5); }
.dbody { flex: 1; padding: 12px 11px 0 11px; border: 1px solid #56606c; background: #f0f0f0; font-feature-settings: "palt"; font-size: 11px; }
fieldset { margin: 0; padding: 5px 10px 0 11px; border: 1px solid #d5dfe5; border-radius: 3px; box-shadow: inset 0 0 0 1px #fff; }
legend { padding: 0 3px; margin-left: -6px; line-height: 14px; font-size: 12px; }
.f1 { height: 75px; }
.f2 { height: 98px; margin-top: 15px; padding-top: 3px; }
fieldset label { display: flex; align-items: center; gap: 4px; height: 21px; white-space: nowrap; }
.f2 label { height: 22px; }
fieldset input { appearance: none; width: 12px; height: 12px; margin: 0; border: 1px solid #8e8f8f; border-radius: 50%; background: radial-gradient(#fff, #cfd3d8 60%); box-shadow: inset 0 0 0 1px #f4f4f4; }
fieldset input:checked { background: radial-gradient(circle at 45% 40%, #5cc8f0, #0b3f70 3px, #0b3f70 4px, #e4e8ec 5px); }
.dbtns { display: flex; justify-content: flex-end; gap: 8px; margin-top: 12px; }
.dbtns button { width: 74px; height: 22px; border: 1px solid #707070; border-radius: 3px; background: linear-gradient(#f2f2f2, #ebebeb 48%, #dddddd 50%, #cfcfcf); box-shadow: inset 0 0 0 1px #fcfcfc; font-feature-settings: "palt"; }
.dbtns .ok { border-color: #3c7fb1; background: linear-gradient(#eaf6fd, #d9f0fc 48%, #bee6fd 50%, #a7d9f5); }

/* Taskbar */
.taskbar {
  display: flex; height: 40px; border-top: 1px solid #14304e;
  background:
    linear-gradient(rgba(255, 255, 255, .35), transparent 3px),
    linear-gradient(120deg, transparent 65%, rgba(90, 170, 220, .35) 67%, transparent 71%),
    linear-gradient(90deg, #1b5c92 0, #2b80b8 4%, #3b9fd6 9%, #48a9dc 30%, #3598d4 40%, #2a8ccc 60%, #2576b8 74%, #1c5796 82%, #1d4880 90%, #1d4373);
}
.start { display: grid; place-items: center; width: 55px; padding-right: 1px; }
.task { display: grid; place-items: center; width: 59px; margin: 0 0 0 3px; border: 1px solid transparent; border-radius: 3px; }
.start + .task { margin-left: 4px; }
.task.on { border-color: #173f5e; background: linear-gradient(120deg, rgba(255, 255, 255, .6), rgba(255, 255, 255, .3) 50%, rgba(255, 255, 255, .12)); box-shadow: inset 0 0 0 1px rgba(255, 255, 255, .5); }
.task.on.bright { background: linear-gradient(120deg, rgba(255, 255, 255, .9), rgba(255, 255, 255, .4) 80%); }
.tray { display: flex; align-items: center; margin-left: auto; color: #fff; }
.ime { display: flex; margin: 0 5px 3px 1px; }
.ime button { display: grid; place-items: center; width: 20px; height: 23px; border: 1px solid #4d79a8; border-radius: 2px; background: rgba(70, 120, 175, .6); font: 16px/20px "Noto Sans CJK JP", sans-serif; }
.ime .alpha { padding-left: 7px; }
.caps { display: grid; grid-template-columns: 22px 10px; align-items: center; justify-items: center; gap: 1px 3px; margin: 0 11px 4px 6px; font: 8px/11px "Liberation Sans", sans-serif; }
.more { margin-right: 14px; }
.more + svg { margin-right: 8px; }
.more + svg + svg { margin-right: 8px; }
.clock { display: flex; flex-direction: column; width: 98px; padding-left: 4px; text-align: center; font-size: 13px; line-height: 18px; }
.peek { align-self: stretch; width: 14px; border: 1px solid #86a3c2; background: linear-gradient(135deg, #6b8db2, #1c3f6b 60%); }
```
